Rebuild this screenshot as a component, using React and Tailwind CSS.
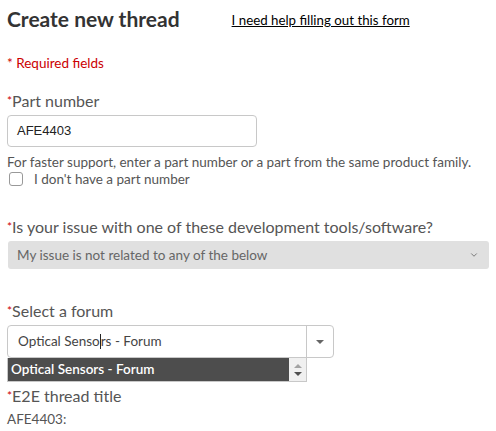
import { ChevronDown } from 'lucide-react';

const Label = ({ children, className = '' }) => (
  <div className={`text-[16px] leading-[20px] text-[#555] ${className}`}>
    <span className="text-[#cc0000] text-[12px] align-top">*</span>
    {children}
  </div>
);

const App = () => {
  return (
    <div className="w-[496px] h-[431px] bg-white overflow-hidden font-['Lato',sans-serif]">
      <div className="flex items-end pl-[7px] pt-[6px]">
        <h1 className="text-[21px] leading-[25px] font-bold text-[#333]">Create new thread</h1>
        <a href="#" className="ml-[52px] mb-[3px] text-[13.3px] leading-[16px] text-black underline">
          I need help filling out this form
        </a>
      </div>

      <div className="pl-[7px] mt-[24px] text-[13.5px] leading-[16px] text-[#cc0000]">* Required fields</div>

      <Label className="pl-[7px] mt-[20px]">Part number</Label>
      <div className="pl-[7px] mt-[4px]">
        <div className="w-[250px] h-[32px] border border-[#c8c8c8] rounded-[4px] flex items-center pl-[9px] text-[13px] text-[#222] font-['Liberation_Sans',sans-serif]">
          AFE4403
        </div>
      </div>
      <div className="pl-[7px] mt-[7px] text-[13.5px] leading-[16px] text-[#555]">
        For faster support, enter a part number or a part from the same product family.
      </div>
      <label className="flex items-center pl-[9px] mt-[1px] text-[13.5px] leading-[16px] text-[#555]">
        <span className="w-[14px] h-[14px] border border-[#999] rounded-[3px] bg-white" />
        <span className="ml-[11px]">I don't have a part number</span>
      </label>

      <Label className="pl-[7px] mt-[30px]">Is your issue with one of these development tools/software?</Label>
      <div className="pl-[8px] pr-[7px] mt-[4px]">
        <div className="h-[28px] bg-[#e0e0e0] rounded-[3px] flex items-center justify-between pl-[9px] pr-[10px] text-[13.5px] text-[#666]">
          <span>My issue is not related to any of the below</span>
          <ChevronDown className="w-[10px] h-[10px] text-[#666]" strokeWidth={2} />
        </div>
      </div>

      <Label className="pl-[7px] mt-[32px]">Select a forum</Label>
      <div className="pl-[7px] mt-[4px] relative">
        <div className="w-[327px] h-[33px] border border-[#c8c8c8] rounded-[4px] flex">
          <div className="flex-1 flex items-center pl-[10px] text-[13.5px] text-[#444]">
            Optical Senso<span className="inline-block w-px h-[15px] bg-[#222]" />rs - Forum
          </div>
          <div className="w-[27px] border-l border-[#c8c8c8] flex items-center justify-center">
            <span className="w-0 h-0 border-l-[4px] border-r-[4px] border-t-[4px] border-l-transparent border-r-transparent border-t-[#666]" />
          </div>
        </div>
        <div className="absolute left-[7px] top-[33px] w-[300px] h-[24px] border border-[#c8c8c8] border-t-0 flex bg-white">
          <div className="flex-1 bg-[#4d4d4d] text-white text-[13.5px] font-semibold flex items-center pl-[3px]">
            Optical Sensors - Forum
          </div>
          <div className="w-[17px] bg-[#f0f0f0] flex flex-col items-center justify-center gap-[4px]">
            <span className="w-0 h-0 border-l-[4px] border-r-[4px] border-b-[4px] border-l-transparent border-r-transparent border-b-[#a3a3a3]" />
            <span className="w-0 h-0 border-l-[4px] border-r-[4px] border-t-[4px] border-l-transparent border-r-transparent border-t-[#505050]" />
          </div>
        </div>
      </div>

      <Label className="pl-[7px] mt-[28px]">E2E thread title</Label>
      <div className="pl-[7px] mt-[5px] text-[13.5px] leading-[16px] text-[#555]">AFE4403:</div>
    </div>
  );
};

export default App;
